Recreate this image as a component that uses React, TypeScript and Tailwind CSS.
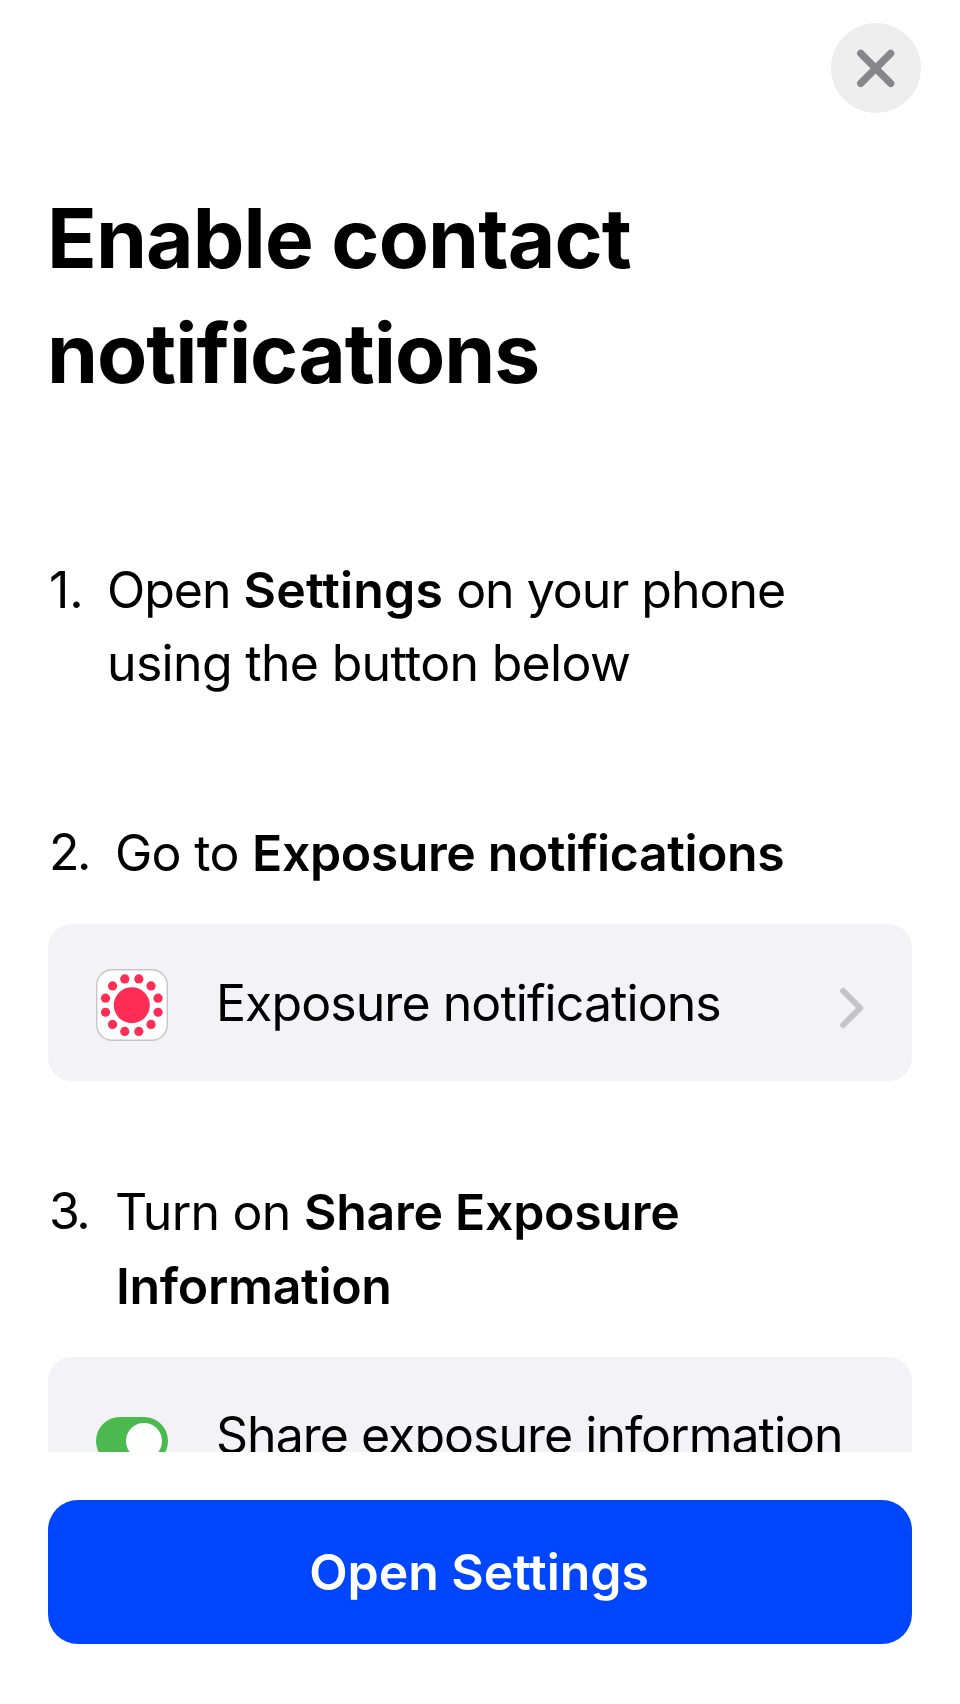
import type { ReactNode } from "react";

function CloseIcon() {
  return (
    <svg viewBox="0 0 90 90" className="h-[90px] w-[90px]" fill="none" stroke="#86868b" strokeWidth="7.2" strokeLinecap="round">
      <path d="M29.7 30.4 59.7 60.4M59.7 30.4 29.7 60.4" />
    </svg>
  );
}

const dots = Array.from({ length: 12 }, (_, i) => {
  const angle = ((i * 30 + 15) * Math.PI) / 180;
  return { x: 35.8 + 27.2 * Math.cos(angle), y: 36.2 + 27.2 * Math.sin(angle) };
});

function ExposureIcon() {
  return (
    <svg viewBox="0 0 72 72" className="h-[72px] w-[72px] shrink-0">
      <rect x="0.7" y="0.7" width="70.6" height="70.6" rx="15.5" fill="#fff" stroke="#c6c6c8" strokeWidth="1.4" />
      <circle cx="35.8" cy="36.2" r="18" fill="#ff2d55" />
      {dots.map((d, i) => (
        <circle key={i} cx={d.x} cy={d.y} r="4.6" fill="#ff2d55" />
      ))}
    </svg>
  );
}

function Chevron() {
  return (
    <svg viewBox="0 0 24 42" className="mt-[11px] h-[42px] w-6 shrink-0" fill="none" stroke="#c4c4c6" strokeWidth="6" strokeLinecap="round" strokeLinejoin="round">
      <path d="M3.2 4 20.2 21 3.2 38" />
    </svg>
  );
}

function Step({ n, indent, children }: { n: number; indent: string; children: ReactNode }) {
  return (
    <div className="flex">
      <span className={`shrink-0 pl-px ${indent} ${n === 1 ? "pt-px tracking-normal" : "tracking-[-2.5px]"}`}>{n}.</span>
      <p className="pt-px">{children}</p>
    </div>
  );
}

export default function App() {
  return (
    <main className="flex h-[1704px] w-[960px] flex-col overflow-hidden bg-white font-['Inter',sans-serif] text-[50px] leading-[73.5px] text-black">
      <div className="h-[1452px] shrink-0 overflow-hidden px-12">
        <div className="-mr-[9px] flex justify-end pt-[23px]">
          <button aria-label="Close" className="h-[90px] w-[90px] rounded-full bg-[#eeeeee]">
            <CloseIcon />
          </button>
        </div>
        <h1 className="mt-[68px] -ml-px text-[82px] leading-[115px] font-bold tracking-[-0.9px]">
          <span className="block">Enable contact</span>
          <span className="block tracking-[-1px]">notifications</span>
        </h1>
        <div className="mt-[142px]">
          <Step n={1} indent="w-[59px]">
            <span className="block tracking-[-1px]">
              Open <b className="font-semibold tracking-[0.15px]">Settings</b> on your phone
            </span>
            <span className="-mt-px mb-px block tracking-[-0.68px]">using the button below</span>
          </Step>
        </div>
        <div className="mt-[115px]">
          <Step n={2} indent="w-[67px]">
            <span className="tracking-[-0.7px]">Go to </span>
            <b className="font-semibold tracking-[-0.42px]">Exposure notifications</b>
          </Step>
        </div>
        <div className="mt-[33.5px] flex h-[157px] items-center rounded-3xl bg-[#f2f2f7] pr-12 pl-12">
          <div className="mt-[5px] h-[72px]">
            <ExposureIcon />
          </div>
          <span className="ml-[48px] flex-1 pt-0.5 tracking-[-0.93px] whitespace-nowrap">Exposure notifications</span>
          <Chevron />
        </div>
        <div className="mt-[94px]">
          <Step n={3} indent="w-[67px]">
            <span className="block">
              <span className="tracking-[-0.75px]">Turn on </span>
              <b className="font-semibold tracking-[-0.28px]">Share Exposure</b>
            </span>
            <b className="block pl-px font-semibold tracking-[-0.3px]">Information</b>
          </Step>
        </div>
        <div className="mt-[34px] flex h-[157px] items-center rounded-3xl bg-[#f2f2f7] pl-12">
          <div className="mt-[11px] flex h-12 w-[72px] shrink-0 items-center justify-end rounded-full bg-[#4bb94f] pr-1.5">
            <div className="h-9 w-9 rounded-full bg-white" />
          </div>
          <span className="ml-[48px] pt-px tracking-[-0.98px] whitespace-nowrap">Share exposure information</span>
        </div>
      </div>
      <div className="px-12 pt-12">
        <button className="h-36 w-full rounded-[30px] bg-[#0046ff] pt-px pr-[2px] font-semibold tracking-[-0.08px] text-white">Open Settings</button>
      </div>
    </main>
  );
}
